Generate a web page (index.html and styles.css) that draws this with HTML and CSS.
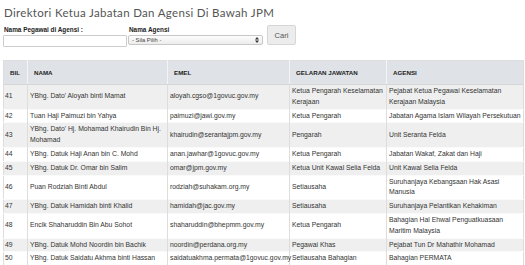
FILE: index.html
```html
<!DOCTYPE html>
<html>
<head>
<meta charset="utf-8">
<link rel="stylesheet" href="styles.css">
</head>
<body>
<div class="page">
  <h1 class="title">Direktori Ketua Jabatan Dan Agensi Di Bawah JPM</h1>
  <form class="search">
    <div class="field field-name">
      <label class="label">Nama Pegawai di Agensi :</label>
      <input class="text-input" type="text">
    </div>
    <div class="field field-agency">
      <label class="label">Nama Agensi</label>
      <div class="select">
        <span class="select-text">- Sila Pilih -</span>
        <svg class="select-arrows" width="4" height="6" viewBox="0 0 4 6"><path d="M0 2.4 L2 0 L4 2.4 Z M0 3.6 L2 6 L4 3.6 Z" fill="#333"/></svg>
      </div>
    </div>
    <button class="btn" type="button">Cari</button>
  </form>
  <table class="dir">
    <colgroup>
      <col class="c-bil"><col class="c-nama"><col class="c-emel"><col class="c-gelaran"><col class="c-agensi">
    </colgroup>
    <thead>
      <tr><th>BIL</th><th>NAMA</th><th>EMEL</th><th>GELARAN JAWATAN</th><th>AGENSI</th></tr>
    </thead>
    <tbody>
      <tr><td>41</td><td>YBhg. Dato' Aloyah binti Mamat</td><td>aloyah.cgso@1govuc.gov.my</td><td>Ketua Pengarah Keselamatan Kerajaan</td><td>Pejabat Ketua Pegawai Keselamatan Kerajaan Malaysia</td></tr>
      <tr><td>42</td><td>Tuan Haji Paimuzi bin Yahya</td><td>paimuzi@jawi.gov.my</td><td>Ketua Pengarah</td><td>Jabatan Agama Islam Wilayah Persekutuan</td></tr>
      <tr><td>43</td><td>YBhg. Dato' Hj. Mohamad Khairudin Bin Hj. Mohamad</td><td>khairudin@serantajpm.gov.my</td><td>Pengarah</td><td>Unit Seranta Felda</td></tr>
      <tr><td>44</td><td>YBhg. Datuk Haji Anan bin C. Mohd</td><td>anan.jawhar@1govuc.gov.my</td><td>Ketua Pengarah</td><td>Jabatan Wakaf, Zakat dan Haji</td></tr>
      <tr><td>45</td><td>YBhg. Datuk Dr. Omar bin Salim</td><td>omar@jpm.gov.my</td><td>Ketua Unit Kawal Selia Felda</td><td>Unit Kawal Selia Felda</td></tr>
      <tr><td>46</td><td>Puan Rodziah Binti Abdul</td><td>rodziah@suhakam.org.my</td><td>Setiausaha</td><td>Suruhanjaya Kebangsaan Hak Asasi Manusia</td></tr>
      <tr><td>47</td><td>YBhg. Datuk Hamidah binti Khalid</td><td>hamidah@jac.gov.my</td><td>Setiausaha</td><td>Suruhanjaya Pelantikan Kehakiman</td></tr>
      <tr><td>48</td><td>Encik Shaharuddin Bin Abu Sohot</td><td>shaharuddin@bhepmm.gov.my</td><td>Ketua Pengarah</td><td>Bahagian Hal Ehwal Penguatkuasaan Maritim Malaysia</td></tr>
      <tr><td>49</td><td>YBhg. Datuk Mohd Noordin bin Bachik</td><td>noordin@perdana.org.my</td><td>Pegawai Khas</td><td>Pejabat Tun Dr Mahathir Mohamad</td></tr>
      <tr><td>50</td><td>YBhg. Datuk Saidatu Akhma binti Hassan</td><td>saidatuakhma.permata@1govuc.gov.my</td><td>Setiausaha Bahagian</td><td>Bahagian PERMATA</td></tr>
    </tbody>
  </table>
</div>
</body>
</html>
```

FILE: styles.css
```css
html, body {
  margin: 0;
  padding: 0;
  background: #fff;
}
.page {
  padding: 4px 3px 0 3px;
  font-family: "Liberation Sans", Arial, sans-serif;
  color: #333;
}
.title {
  margin: 0 0 0 1px;
  font-family: "Lato", "Liberation Sans", sans-serif;
  font-weight: 400;
  font-size: 11.5px;
  line-height: 17px;
  color: #555;
  letter-spacing: 0.32px;
}
.search {
  display: flex;
  align-items: flex-end;
  margin-top: 6px;
  height: 20px;
}
.field {
  display: flex;
  flex-direction: column;
}
.field-name { width: 124px; }
.field-agency { width: 136px; margin-left: 1px; }
.label {
  font-size: 6.4px;
  font-weight: bold;
  line-height: 8px;
  color: #222;
  margin-left: 1px;
  margin-bottom: 1px;
}
.text-input {
  box-sizing: border-box;
  width: 124px;
  height: 12px;
  margin: 0;
  padding: 0;
  border: 1px solid #ccc;
  border-radius: 1px;
  background: #fff;
}
.select {
  box-sizing: border-box;
  width: 135px;
  height: 10px;
  margin-bottom: 2px;
  border: 1px solid #c8c8c8;
  border-radius: 2px;
  background: linear-gradient(#fdfdfd, #ececec);
  display: flex;
  align-items: center;
  justify-content: space-between;
  padding: 0 3px 0 3px;
}
.select-text {
  font-size: 5.8px;
  color: #444;
  line-height: 8px;
}
.select-arrows { display: block; }
.btn {
  box-sizing: border-box;
  width: 29px;
  height: 20px;
  margin: 0 0 2px 3px;
  padding: 0;
  border: 1px solid #d6d6d6;
  border-radius: 2px;
  background: #ececec;
  font-family: "Liberation Sans", Arial, sans-serif;
  font-size: 7.5px;
  color: #555;
}
.dir {
  margin-top: 13px;
  width: 520px;
  table-layout: fixed;
  border-collapse: collapse;
  border: 1px solid #ddd;
  font-size: 6.8px;
}
.c-bil { width: 24px; }
.c-nama { width: 140px; }
.c-emel { width: 122px; }
.c-gelaran { width: 97px; }
.c-agensi { width: 137px; }
.dir th {
  height: 23px;
  padding: 0 6px;
  background: #dfe2e6;
  text-align: left;
  font-size: 6.2px;
  font-weight: bold;
  color: #222;
  border-left: 1px solid #f4f4f4;
  border-bottom: 1px solid #d6d6d6;
}
.dir th:first-child { border-left: none; }
.dir td {
  padding: 1px 2px 1px 2px;
  line-height: 10.8px;
  vertical-align: middle;
  color: #333;
  border-left: 1px solid #ddd;
  border-top: 1px solid #fafafa;
  overflow: visible;
  white-space: normal;
}
.dir td:first-child { border-left: none; padding-left: 1px; }
.dir tbody tr:nth-child(odd) td { background: #efefef; }
.dir tbody tr:nth-child(even) td { background: #fff; }
```
